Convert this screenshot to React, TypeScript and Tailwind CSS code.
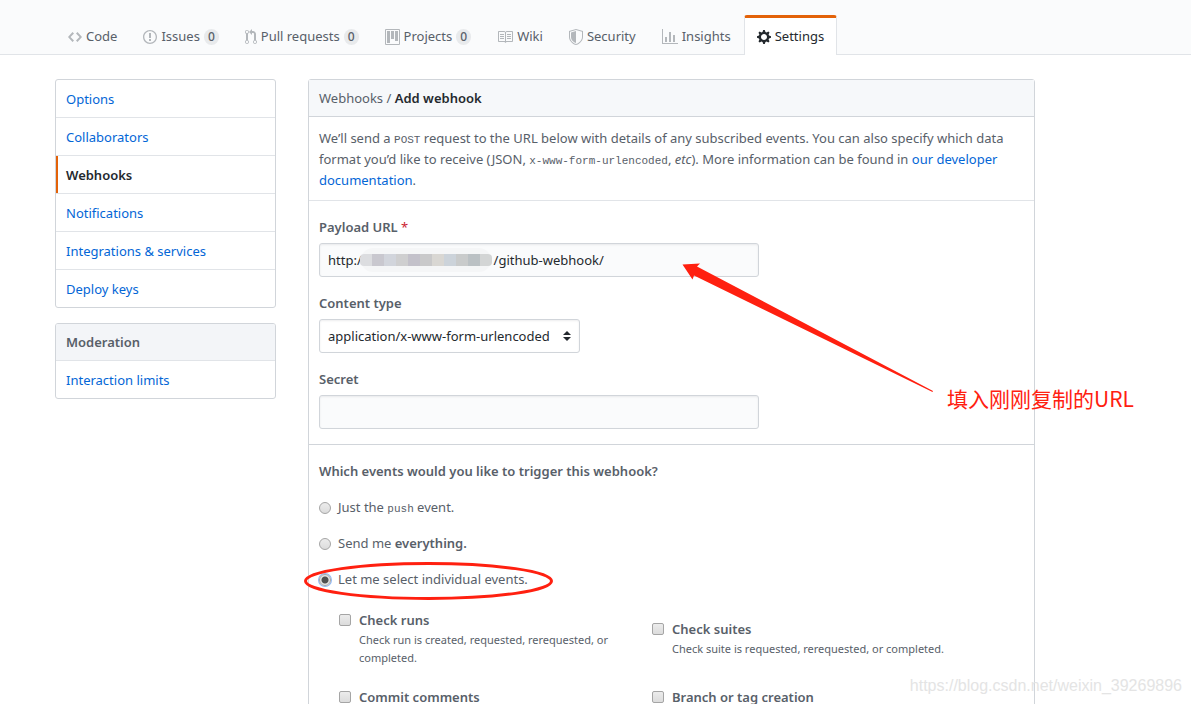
import { useState } from "react";
import type { ReactNode } from "react";

type Tab = {
  label: string;
  width: number;
  path: string;
  count?: number;
  current?: boolean;
};

const TABS: Tab[] = [
  {
    label: "Code",
    width: 14,
    path: "M9.5 3L8 4.5 11.5 8 8 11.5 9.5 13 14 8 9.5 3zm-5 0L0 8l4.5 5L6 11.5 2.5 8 6 4.5 4.5 3z",
  },
  {
    label: "Issues",
    width: 14,
    count: 0,
    path: "M7 2.3c3.14 0 5.7 2.56 5.7 5.7s-2.56 5.7-5.7 5.7A5.71 5.71 0 0 1 1.3 8c0-3.14 2.56-5.7 5.7-5.7zM7 1C3.14 1 0 4.14 0 8s3.14 7 7 7 7-3.14 7-7-3.14-7-7-7zm1 3H6v5h2V4zm0 6H6v2h2v-2z",
  },
  {
    label: "Pull requests",
    width: 12,
    count: 0,
    path: "M11 11.28V5c-.03-.78-.34-1.47-.94-2.06C9.46 2.35 8.78 2.03 8 2H7V0L4 3l3 3V4h1c.27.02.48.11.69.31.21.2.3.42.31.69v6.28A1.993 1.993 0 0 0 10 15a1.993 1.993 0 0 0 1-3.72zm-1 2.92c-.66 0-1.2-.55-1.2-1.2 0-.65.55-1.2 1.2-1.2.65 0 1.2.55 1.2 1.2 0 .65-.55 1.2-1.2 1.2zM4 3c0-1.11-.89-2-2-2a1.993 1.993 0 0 0-1 3.72v6.56A1.993 1.993 0 0 0 2 15a1.993 1.993 0 0 0 1-3.72V4.72c.59-.34 1-.98 1-1.72zm-.8 10c0 .66-.55 1.2-1.2 1.2-.65 0-1.2-.55-1.2-1.2 0-.65.55-1.2 1.2-1.2.65 0 1.2.55 1.2 1.2zM2 4.2C1.34 4.2.8 3.65.8 3c0-.65.55-1.2 1.2-1.2.65 0 1.2.55 1.2 1.2 0 .65-.55 1.2-1.2 1.2z",
  },
  {
    label: "Projects",
    width: 15,
    count: 0,
    path: "M10 12h3V2h-3v10zm-4-2h3V2H6v8zm-4 4h3V2H2v12zm-1 1h13V1H1v14zM14 0H1a1 1 0 0 0-1 1v14a1 1 0 0 0 1 1h13a1 1 0 0 0 1-1V1a1 1 0 0 0-1-1z",
  },
  {
    label: "Wiki",
    width: 16,
    path: "M3 5h4v1H3V5zm0 3h4V7H3v1zm0 2h4V9H3v1zm11-5h-4v1h4V5zm0 2h-4v1h4V7zm0 2h-4v1h4V9zm2-6v9c0 .55-.45 1-1 1H9.5l-1 1-1-1H2c-.55 0-1-.45-1-1V3c0-.55.45-1 1-1h5.5l1 1 1-1H15c.55 0 1 .45 1 1zm-8 .5L7.5 3H2v9h6V3.5zm7-.5H9.5l-.5.5V12h6V3z",
  },
  {
    label: "Security",
    width: 14,
    path: "M0 2l7-2 7 2v6.02C14 12.69 8.69 16 7 16c-1.69 0-7-3.31-7-7.98V2zm1 .75L7 1l6 1.75v5.268C13 12.104 8.449 15 7 15c-1.449 0-6-2.896-6-6.982V2.75zm1 .75L7 2v12c-1.207 0-5-2.482-5-5.985V3.5z",
  },
  {
    label: "Insights",
    width: 16,
    path: "M16 14v1H0V0h1v14h15zM5 13H3V8h2v5zm4 0H7V3h2v10zm4 0h-2V6h2v7z",
  },
  {
    label: "Settings",
    width: 14,
    current: true,
    path: "M14 8.77v-1.6l-1.94-.64-.45-1.09.88-1.84-1.13-1.13-1.81.91-1.09-.45-.69-1.92h-1.6l-.63 1.94-1.11.45-1.84-.88-1.13 1.13.91 1.81-.45 1.09L0 7.23v1.59l1.94.64.45 1.09-.88 1.84 1.13 1.13 1.81-.91 1.09.45.69 1.92h1.59l.63-1.94 1.11-.45 1.84.88 1.13-1.13-.92-1.81.47-1.09L14 8.75v.02zM7 11c-1.66 0-3-1.34-3-3s1.34-3 3-3 3 1.34 3 3-1.34 3-3 3z",
  },
];

const MENU = [
  "Options",
  "Collaborators",
  "Webhooks",
  "Notifications",
  "Integrations & services",
  "Deploy keys",
];

const EVENTS = [
  {
    id: "check_runs",
    label: "Check runs",
    note: "Check run is created, requested, rerequested, or completed.",
  },
  {
    id: "check_suites",
    label: "Check suites",
    note: "Check suite is requested, rerequested, or completed.",
  },
  { id: "commit_comments", label: "Commit comments" },
  { id: "create", label: "Branch or tag creation" },
];

// the host part of the address is blanked out
const PAYLOAD_URL = "http:/" + "\u00a0".repeat(39) + "/github-webhook/";

const MOSAIC = [
  "bg-[#dcdde0]",
  "bg-[#c9c8cf]",
  "bg-[#d2d5dc]",
  "bg-[#cfcfd0]",
  "bg-[#c3c1ca]",
  "bg-[#c9c9ca]",
  "bg-[#d9d7d3]",
  "bg-[#ccd3da]",
  "bg-[#c9cbcb]",
  "bg-[#bbc1c4]",
  "bg-[#d3d5d5]",
];

export default function App() {
  const [url, setUrl] = useState(PAYLOAD_URL);
  const [trigger, setTrigger] = useState("choose");

  return (
    <div className="relative h-screen overflow-hidden bg-white font-['Noto_Sans','Open_Sans',sans-serif] text-[13px] leading-[21px] text-[#586069]">
      <header className="border-b border-[#e1e4e8] bg-[#fafbfc] pt-[15px] pl-[55px]">
        <nav aria-label="Repository" className="-mb-px flex">
          {TABS.map((tab) => (
            <TabLink key={tab.label} tab={tab} />
          ))}
        </nav>
      </header>

      <div className="mt-6 ml-[55px] flex max-w-[980px] items-start gap-8">
        <Sidebar />

        <main className="min-w-0 flex-1 rounded-t-[3px] border border-[#d1d5da]">
          <h1 className="border-b border-[#d1d5da] bg-[#f6f8fa] px-[10px] pt-[8px] pb-[7px]">
            <a href="#webhooks">Webhooks</a> /{" "}
            <span className="font-semibold text-[#24292e]">Add webhook</span>
          </h1>

          <p className="border-b border-[#e1e4e8] px-[10px] pt-[11px] pb-[9px]">
            We’ll send a <Mono>POST</Mono> request to the URL below with details of any
            subscribed events. You can also specify which data format you’d like to
            receive (JSON, <Mono>x-www-form-urlencoded</Mono>, <em>etc</em>). More
            information can be found in{" "}
            <a href="#docs" className="text-[#0366d6]">
              our developer documentation
            </a>
            .
          </p>

          <form onSubmit={(e) => e.preventDefault()}>
            <div className="flex flex-col gap-4 border-b border-[#d1d5da] px-[10px] pt-4 pb-[15px]">
              <Field id="payload" label="Payload URL" required>
                <div className="relative max-w-[440px]">
                  <TextInput id="payload" value={url} onChange={setUrl} />
                  <div className="absolute top-[5px] left-[42px] h-6 w-[130px] rounded-full bg-[#f5f6f7]" />
                  <div className="absolute top-[11px] left-[41px] flex h-3 w-[132px] overflow-hidden rounded-sm">
                    {MOSAIC.map((color) => (
                      <span key={color} className={`flex-1 ${color}`} />
                    ))}
                  </div>
                </div>
              </Field>

              <Field id="content-type" label="Content type">
                <div className="relative w-[261px]">
                  <select
                    id="content-type"
                    className="h-[34px] w-full appearance-none rounded-[3px] border border-[#d1d5da] bg-white px-2 text-[#24292e] shadow-[inset_0_1px_2px_rgba(27,31,35,0.075)]"
                  >
                    <option>application/x-www-form-urlencoded</option>
                    <option>application/json</option>
                  </select>
                  <svg
                    aria-hidden="true"
                    viewBox="0 0 8 10"
                    className="pointer-events-none absolute top-3 right-[9px] h-[10px] w-2 fill-[#24292e]"
                  >
                    <path d="M4 0l4 4H0zM4 10l4-4H0z" />
                  </svg>
                </div>
              </Field>

              <Field id="secret" label="Secret">
                <div className="max-w-[440px]">
                  <TextInput id="secret" />
                </div>
              </Field>
            </div>

            <fieldset className="px-[10px] pt-4">
              <legend className="float-left w-full font-semibold">
                Which events would you like to trigger this webhook?
              </legend>
              <div className="clear-both flex flex-col gap-[15px] pt-[15px]">
                <TriggerOption value="push" current={trigger} onSelect={setTrigger}>
                  Just the <Mono>push</Mono> event.
                </TriggerOption>
                <TriggerOption value="all" current={trigger} onSelect={setTrigger}>
                  Send me <strong className="font-semibold">everything.</strong>
                </TriggerOption>
                <TriggerOption value="choose" current={trigger} onSelect={setTrigger}>
                  Let me select individual events.
                </TriggerOption>
              </div>

              <div className="mt-5 ml-5 grid grid-cols-[280px_1fr] items-center gap-x-[33px] gap-y-5">
                {EVENTS.map((event) => (
                  <EventOption key={event.id} {...event} />
                ))}
              </div>
            </fieldset>
          </form>
        </main>
      </div>

      <Annotations />
    </div>
  );
}

function TabLink({ tab }: { tab: Tab }) {
  return (
    <a
      href={`#${tab.label.toLowerCase().replace(" ", "-")}`}
      aria-current={tab.current ? "page" : undefined}
      className={`flex h-10 items-center gap-1 border-x border-t-[3px] px-3 whitespace-nowrap ${
        tab.current
          ? "rounded-t-[3px] border-x-[#e1e4e8] border-t-[#e36209] bg-white text-[#24292e]"
          : "border-transparent"
      }`}
    >
      <svg
        aria-hidden="true"
        width={tab.width}
        height="16"
        viewBox={`0 0 ${tab.width} 16`}
        className={`shrink-0 ${tab.current ? "fill-[#24292e]" : "fill-[#b3b7bb]"}`}
      >
        <path fillRule="evenodd" d={tab.path} />
      </svg>
      {tab.label}
      {tab.count !== undefined && (
        <span className="rounded-full bg-[#e8eaec] px-1 text-xs leading-4 font-medium">
          {tab.count}
        </span>
      )}
    </a>
  );
}

function Sidebar() {
  return (
    <aside className="flex w-[221px] shrink-0 flex-col gap-[15px]">
      <nav
        aria-label="Settings"
        className="divide-y divide-[#e1e4e8] rounded-[3px] border border-[#d1d5da]"
      >
        {MENU.map((item) => (
          <MenuLink key={item} label={item} current={item === "Webhooks"} />
        ))}
      </nav>
      <nav
        aria-label="Moderation"
        className="divide-y divide-[#e1e4e8] overflow-hidden rounded-[3px] border border-[#d1d5da]"
      >
        <h2 className="bg-[#f3f5f8] px-[10px] py-2 leading-5 font-semibold">Moderation</h2>
        <MenuLink label="Interaction limits" />
      </nav>
    </aside>
  );
}

function MenuLink({ label, current = false }: { label: string; current?: boolean }) {
  return (
    <a
      href="#settings"
      aria-current={current ? "page" : undefined}
      className={`block px-[10px] pt-[9px] pb-[7px] ${
        current
          ? "font-semibold text-[#24292e] shadow-[inset_2px_0_0_#e36209]"
          : "text-[#0366d6]"
      }`}
    >
      {label}
    </a>
  );
}

function Field({
  id,
  label,
  required = false,
  children,
}: {
  id: string;
  label: string;
  required?: boolean;
  children: ReactNode;
}) {
  return (
    <div className="flex flex-col gap-[5px]">
      <label htmlFor={id} className="font-semibold">
        {label}
        {required && <span className="font-normal text-[#cb2431]"> *</span>}
      </label>
      {children}
    </div>
  );
}

function TextInput({
  id,
  value,
  onChange,
}: {
  id: string;
  value?: string;
  onChange?: (value: string) => void;
}) {
  return (
    <input
      id={id}
      type="text"
      value={value}
      onChange={(e) => onChange?.(e.target.value)}
      className="block h-[34px] w-full rounded-[3px] border border-[#d1d5da] bg-[#fafbfc] px-2 text-[#24292e] shadow-[inset_0_1px_2px_rgba(27,31,35,0.075)]"
    />
  );
}

function TriggerOption({
  value,
  current,
  onSelect,
  children,
}: {
  value: string;
  current: string;
  onSelect: (value: string) => void;
  children: ReactNode;
}) {
  const checked = value === current;
  return (
    <label className="flex items-center gap-[7px]">
      <input
        type="radio"
        name="trigger"
        value={value}
        checked={checked}
        onChange={() => onSelect(value)}
        className={`size-3 appearance-none rounded-full border border-[#a5a5a5] ${
          checked
            ? "bg-[radial-gradient(circle,#505050_3px,#e4e4e4_4px)] shadow-[0_0_0_1px_#8fb8f5]"
            : "bg-linear-to-b from-[#ececec] to-[#dcdcdc]"
        }`}
      />
      <span>{children}</span>
    </label>
  );
}

function EventOption({ id, label, note }: { id: string; label: string; note?: string }) {
  return (
    <div className="flex items-start gap-2">
      <input
        id={id}
        type="checkbox"
        className="my-1 size-3 shrink-0 appearance-none rounded-[2px] border border-[#a5a5a5] bg-linear-to-b from-[#ececec] to-[#dcdcdc] checked:bg-[#586069]"
      />
      <div>
        <label htmlFor={id} className="block font-semibold">
          {label}
        </label>
        {note && <p className="text-[11px] leading-[18px]">{note}</p>}
      </div>
    </div>
  );
}

function Mono({ children }: { children: ReactNode }) {
  return (
    <code className="font-['Liberation_Mono',monospace] text-[11px] leading-none">
      {children}
    </code>
  );
}

// Red marks and the site watermark, drawn over the page
function Annotations() {
  return (
    <div className="pointer-events-none absolute inset-0">
      <svg
        aria-hidden="true"
        viewBox="0 0 252 130"
        className="absolute top-[263px] left-[682px] h-[130px] w-[252px] fill-[#ff2010]"
      >
        <path d="M0.5 1.5L18 0.5L15 3.5L251 128L250.500 129L12 12.500L10.500 16.500Z" />
      </svg>
      <svg
        aria-hidden="true"
        viewBox="0 0 250 38"
        className="absolute top-[562px] left-[304px] h-[38px] w-[250px] fill-none stroke-[#ff2010] stroke-[3]"
      >
        <ellipse cx="124.5" cy="19" rx="123" ry="17.500" />
      </svg>
      <p className="absolute top-[383px] left-[947px] font-['Noto_Sans_CJK_SC',sans-serif] text-[21px] leading-[30px] whitespace-nowrap text-[#ff2010]">
        填入刚刚复制的URL
      </p>
      <p className="absolute right-[9px] bottom-2 font-['Liberation_Sans',sans-serif] text-base leading-5 text-[#e4e4e4]">
        https://blog.csdn.net/weixin_39269896
      </p>
    </div>
  );
}
